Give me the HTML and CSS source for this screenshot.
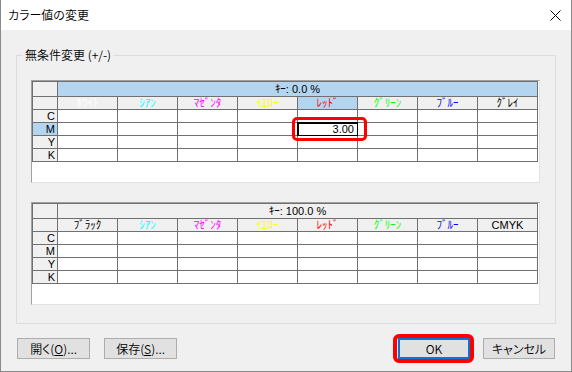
FILE: index.html
```html
<!DOCTYPE html>
<html lang="ja">
<head>
<meta charset="UTF-8">
<title>カラー値の変更</title>
<link rel="stylesheet" href="styles.css">
</head>
<body>
<div class="window">
  <div class="titlebar">
    <span class="title">カラー値の変更</span>
    <svg class="close" width="11" height="11" viewBox="0 0 11 11"><path d="M0.5 0.5L10.5 10.5M10.5 0.5L0.5 10.5" stroke="#000" stroke-width="1"/></svg>
  </div>
  <div class="content">
    <div class="group">
      <div class="group-label">無条件変更 (+/-)</div>

      <!-- 0% table -->
      <div class="grid-box">
        <div class="sheet">
          <div class="hd"></div>
          <div class="hd key sel">ｷｰ: 0.0 %</div>

          <div class="hd"></div>
          <div class="hd c-white">ﾎﾜｲﾄ</div>
          <div class="hd c-cyan">ｼｱﾝ</div>
          <div class="hd c-magenta">ﾏｾﾞﾝﾀ</div>
          <div class="hd c-yellow">ｲｴﾛｰ</div>
          <div class="hd c-red sel">ﾚｯﾄﾞ</div>
          <div class="hd c-green">ｸﾞﾘｰﾝ</div>
          <div class="hd c-blue">ﾌﾞﾙｰ</div>
          <div class="hd">ｸﾞﾚｲ</div>

          <div class="hd row">C</div>
          <div class="cell"></div><div class="cell"></div><div class="cell"></div><div class="cell"></div>
          <div class="cell"></div><div class="cell"></div><div class="cell"></div><div class="cell"></div>

          <div class="hd row sel">M</div>
          <div class="cell"></div><div class="cell"></div><div class="cell"></div><div class="cell"></div>
          <div class="cell edit"><div class="edit-box">3.00</div></div>
          <div class="cell"></div><div class="cell"></div><div class="cell"></div>

          <div class="hd row">Y</div>
          <div class="cell"></div><div class="cell"></div><div class="cell"></div><div class="cell"></div>
          <div class="cell"></div><div class="cell"></div><div class="cell"></div><div class="cell"></div>

          <div class="hd row">K</div>
          <div class="cell"></div><div class="cell"></div><div class="cell"></div><div class="cell"></div>
          <div class="cell"></div><div class="cell"></div><div class="cell"></div><div class="cell"></div>
        </div>
      </div>

      <!-- 100% table -->
      <div class="grid-box">
        <div class="sheet">
          <div class="hd"></div>
          <div class="hd key">ｷｰ: 100.0 %</div>

          <div class="hd"></div>
          <div class="hd">ﾌﾞﾗｯｸ</div>
          <div class="hd c-cyan">ｼｱﾝ</div>
          <div class="hd c-magenta">ﾏｾﾞﾝﾀ</div>
          <div class="hd c-yellow">ｲｴﾛｰ</div>
          <div class="hd c-red">ﾚｯﾄﾞ</div>
          <div class="hd c-green">ｸﾞﾘｰﾝ</div>
          <div class="hd c-blue">ﾌﾞﾙｰ</div>
          <div class="hd">CMYK</div>

          <div class="hd row">C</div>
          <div class="cell"></div><div class="cell"></div><div class="cell"></div><div class="cell"></div>
          <div class="cell"></div><div class="cell"></div><div class="cell"></div><div class="cell"></div>

          <div class="hd row">M</div>
          <div class="cell"></div><div class="cell"></div><div class="cell"></div><div class="cell"></div>
          <div class="cell"></div><div class="cell"></div><div class="cell"></div><div class="cell"></div>

          <div class="hd row">Y</div>
          <div class="cell"></div><div class="cell"></div><div class="cell"></div><div class="cell"></div>
          <div class="cell"></div><div class="cell"></div><div class="cell"></div><div class="cell"></div>

          <div class="hd row">K</div>
          <div class="cell"></div><div class="cell"></div><div class="cell"></div><div class="cell"></div>
          <div class="cell"></div><div class="cell"></div><div class="cell"></div><div class="cell"></div>
        </div>
      </div>
    </div>

    <div class="buttons">
      <button class="btn">開く(<u>O</u>)...</button>
      <button class="btn">保存(<u>S</u>)...</button>
      <button class="btn ok">OK</button>
      <button class="btn cancel">キャンセル</button>
    </div>
  </div>
</div>
</body>
</html>
```

FILE: styles.css
```css
body {
  margin: 0;
  background: #f0f0f0;
  font-family: "Noto Sans CJK JP", sans-serif;
  font-size: 12px;
  font-weight: 350;
  color: #000;
}

.window {
  width: 572px;
  height: 372px;
  box-sizing: border-box;
  border: 1px solid #8a8a8a;
  border-top: none;
  background: #f0f0f0;
}

.titlebar {
  height: 30px;
  background: #fff;
  display: flex;
  align-items: center;
  justify-content: space-between;
  padding: 0 10px 0 7px;
}
.title {
  font-feature-settings: "palt";
  line-height: 16px;
}
.close {
  display: block;
}

.content {
  padding: 0 15px;
}

.group {
  margin-top: 25px;
  border: 1px solid #dcdcdc;
  padding: 0 0 18px 14px;
}
.group-label {
  width: fit-content;
  margin: -9px 0 0 -8px;
  padding: 0 2px;
  line-height: 16px;
  background: #f0f0f0;
}

.grid-box {
  width: 509px;
  height: 103px;
  box-sizing: border-box;
  margin-top: 17px;
  background: #fff;
  border-left: 1px solid #a0a0a0;
  border-top: 1px solid #a0a0a0;
  border-right: 1px solid #e3e3e3;
  border-bottom: 1px solid #e3e3e3;
}
.grid-box + .grid-box {
  margin-top: 19px;
}

.sheet {
  display: grid;
  grid-template-columns: 24px repeat(8, 59px);
  grid-template-rows: 14px repeat(5, 12px);
  gap: 1px;
  padding: 1px;
  width: fit-content;
  background: #707070;
  font-family: "Liberation Sans", "Noto Sans CJK JP", sans-serif;
  font-weight: 400;
}

.hd {
  background: #f0f0f0;
  text-align: center;
  line-height: 12px;
  font-size: 11px;
  white-space: nowrap;
}
.hd.key {
  grid-column: 2 / -1;
  line-height: 14px;
}
.hd.row {
  text-align: right;
  padding-right: 2px;
}
.hd.sel {
  background: #b3d5f0;
}

.c-white { color: #fff; }
.c-cyan { color: #00ffff; }
.c-magenta { color: #ff00ff; }
.c-yellow { color: #ffff00; }
.c-red { color: #ff0000; }
.c-green { color: #00ff00; }
.c-blue { color: #0000ff; }

.cell {
  background: #fff;
}
.cell.edit {
  position: relative;
}
.edit-box {
  position: absolute;
  top: -1px;
  left: -1px;
  width: 61px;
  height: 14px;
  box-sizing: border-box;
  background: #fff;
  border-top: 2px solid #000;
  border-left: 2px solid #000;
  border-right: 1px solid #000;
  border-bottom: 1px solid #000;
  padding-right: 3px;
  text-align: right;
  line-height: 11px;
  font-size: 11px;
}
/* red callout around the edited value */
.cell.edit::after {
  content: "";
  position: absolute;
  left: -6px;
  top: -6px;
  width: 75px;
  height: 24px;
  box-sizing: border-box;
  border: 3px solid #ff0000;
  border-radius: 5px;
}

.buttons {
  display: flex;
  margin-top: 14px;
  padding: 0 1px;
}
.btn {
  width: 73px;
  height: 21px;
  padding: 0;
  background: #e1e1e1;
  border: 1px solid #adadad;
  border-radius: 0;
  font-family: "Noto Sans CJK JP", sans-serif;
  font-size: 12px;
  font-weight: 350;
  font-feature-settings: "palt";
  line-height: 19px;
  color: #000;
}
.btn + .btn {
  margin-left: 14px;
}
.btn.ok {
  position: relative;
  width: 72px;
  margin-left: auto;
  border: 2px solid #0078d7;
  line-height: 17px;
}
.btn.ok::after {
  content: "";
  position: absolute;
  left: -7px;
  top: -6px;
  right: -6px;
  bottom: -6px;
  border: 4px solid #ff0000;
  border-radius: 6px;
}
.btn.cancel {
  width: 72px;
  margin-left: 13px;
}
```
